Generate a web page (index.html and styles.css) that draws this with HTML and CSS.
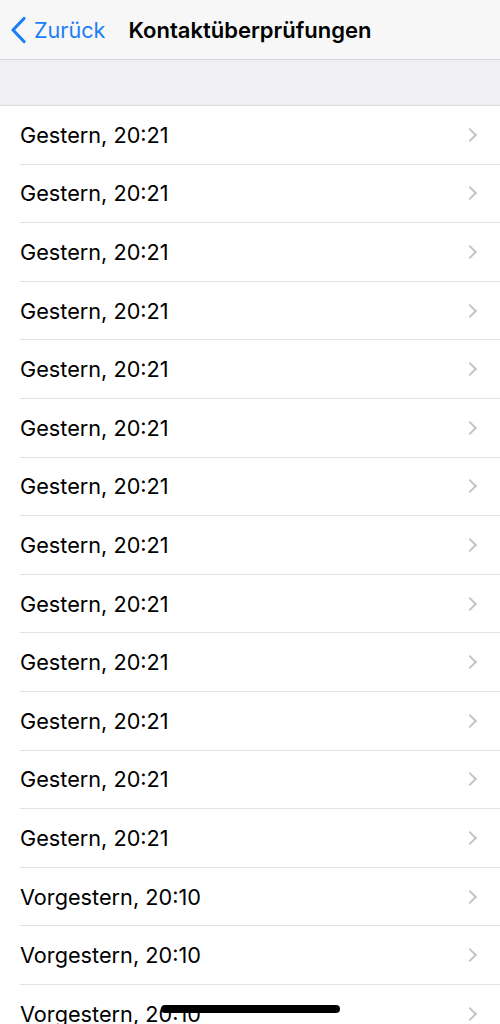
FILE: index.html
```html
<!DOCTYPE html>
<html>
<head>
    <meta charset="utf-8">
    <title>Kontaktüberprüfungen</title>
    <link rel="stylesheet" href="styles.css">
</head>
<body>
    <div class="navbar">
        <a class="back" href="#">
            <svg class="back-icon" width="20" height="28" viewBox="0 0 20 28">
                <path d="M15 2.5 L4 14 L15 25.5" fill="none" stroke="#1a7ef5" stroke-width="3.2" stroke-linecap="round" stroke-linejoin="round"/>
            </svg>
            <span>Zurück</span>
        </a>
        <div class="title">Kontaktüberprüfungen</div>
    </div>
    <div class="section-gap"></div>
    <ul class="list">
        <li class="row"><span>Gestern, 20:21</span><span class="chev"></span></li>
        <li class="row"><span>Gestern, 20:21</span><span class="chev"></span></li>
        <li class="row"><span>Gestern, 20:21</span><span class="chev"></span></li>
        <li class="row"><span>Gestern, 20:21</span><span class="chev"></span></li>
        <li class="row"><span>Gestern, 20:21</span><span class="chev"></span></li>
        <li class="row"><span>Gestern, 20:21</span><span class="chev"></span></li>
        <li class="row"><span>Gestern, 20:21</span><span class="chev"></span></li>
        <li class="row"><span>Gestern, 20:21</span><span class="chev"></span></li>
        <li class="row"><span>Gestern, 20:21</span><span class="chev"></span></li>
        <li class="row"><span>Gestern, 20:21</span><span class="chev"></span></li>
        <li class="row"><span>Gestern, 20:21</span><span class="chev"></span></li>
        <li class="row"><span>Gestern, 20:21</span><span class="chev"></span></li>
        <li class="row"><span>Gestern, 20:21</span><span class="chev"></span></li>
        <li class="row"><span>Vorgestern, 20:10</span><span class="chev"></span></li>
        <li class="row"><span>Vorgestern, 20:10</span><span class="chev"></span></li>
        <li class="row"><span>Vorgestern, 20:10</span><span class="chev"></span></li>
    </ul>
    <div class="home-indicator"></div>
</body>
</html>
```

FILE: styles.css
```css
body {
    font-family: Inter, "Liberation Sans", Arial, sans-serif;
    margin: 0;
    padding: 0;
    background-color: #fff;
    height: 1024px;
    overflow: hidden;
}
.navbar {
    height: 60px;
    box-sizing: border-box;
    background-color: #f7f7f8;
    border-bottom: 1px solid #d8d8dc;
    display: flex;
    align-items: center;
}
.back {
    display: flex;
    align-items: center;
    color: #1a7ef5;
    text-decoration: none;
    font-size: 21.6px;
    padding-left: 9px;
    gap: 5px;
}
.title {
    font-size: 22px;
    font-weight: 600;
    color: #000;
    margin-left: 23px;
}
.section-gap {
    height: 45px;
    background-color: #efeff4;
    border-bottom: 1px solid #dcdce0;
}
.list {
    list-style: none;
    margin: 0;
    padding: 0 0 0 20px;
}
.row {
    height: 58.6px;
    box-sizing: border-box;
    border-bottom: 1px solid #e2e2e4;
    display: flex;
    align-items: center;
    justify-content: space-between;
    font-size: 21.7px;
    color: #000;
    padding-right: 25px;
}
.chev {
    width: 8px;
    height: 8px;
    border-top: 2px solid #c4c4c8;
    border-right: 2px solid #c4c4c8;
    transform: rotate(45deg);
}
.home-indicator {
    position: fixed;
    left: 161px;
    top: 1005px;
    width: 179px;
    height: 8px;
    border-radius: 4px;
    background-color: #000;
}
```
